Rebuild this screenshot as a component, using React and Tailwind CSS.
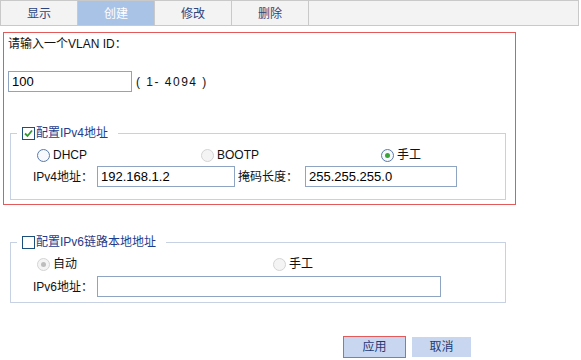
import React from 'react';

function Radio({ checked = false, disabled = false }) {
    const ring = disabled ? 'border-[#d4d4d4] bg-[#f4f4f4]' : 'border-[#5a7aa8] bg-[#f7f9fc]';
    return (
        <span className={`inline-flex w-[13px] h-[13px] rounded-full border items-center justify-center shrink-0 ${ring}`}>
            {checked && (
                <span className={`w-[5px] h-[5px] rounded-full ${disabled ? 'bg-[#bdbdbd]' : 'bg-[#3aa53a]'}`}></span>
            )}
        </span>
    );
}

function Checkbox({ checked = false }) {
    return (
        <span className="inline-flex w-[13px] h-[13px] border border-[#1d4f7c] bg-white items-center justify-center shrink-0">
            {checked && (
                <svg className="w-[9px] h-[9px]" viewBox="0 0 9 9" fill="none">
                    <path d="M1 4.5 L3.5 7 L8 1.5" stroke="#2e9a2e" strokeWidth="1.8" />
                </svg>
            )}
        </span>
    );
}

function TextInput({ value, className }) {
    return (
        <div className={`h-[21px] border border-[#8ea4c0] bg-white pl-[3px] flex items-center text-[13px] text-black ${className}`}>
            {value}
        </div>
    );
}

export default function App() {
    const tabs = ['显示', '创建', '修改', '删除'];

    return (
        <div className="w-[581px] h-[360px] bg-white text-[12px] text-[#111] overflow-hidden" style={{ fontFamily: '"Liberation Sans", "Noto Sans CJK SC", sans-serif' }}>
            {/* tab bar */}
            <div className="w-[579px] h-[26px] flex border border-[#c9c9c9] bg-[#f3f3f3]">
                {tabs.map((t, i) => (
                    <div
                        key={t}
                        className={`w-[77px] h-full pt-[1px] flex items-center justify-center border-r border-[#c9c9c9] text-[12px] ${i === 1 ? 'bg-[#a9c3e7] text-white' : 'text-[#2c447c]'}`}
                    >
                        {t}
                    </div>
                ))}
            </div>

            {/* VLAN + IPv4 */}
            <div className="ml-[3px] mt-[6px] w-[513px] h-[173px] border border-[#e25a5a] pl-[4px]">
                <div className="pt-[2px] leading-[18px]">请输入一个VLAN ID：</div>
                <div className="mt-[18px] flex items-center">
                    <TextInput value="100" className="w-[124px]" />
                    <span className="ml-[4px] tracking-[1.5px]">( 1- 4094 )</span>
                </div>

                <fieldset className="mt-[34px] ml-[2px] w-[496px] border border-[#c6d2e3] pb-[12px]">
                    <legend className="ml-[6px] pl-[5px] pr-[10px] h-[14px] flex items-center gap-[1px]">
                        <Checkbox checked />
                        <span className="text-[#1f3d8c] text-[12px]">配置IPv4地址</span>
                    </legend>
                    <div className="mt-[6px] h-[18px] pl-[26px] flex items-center">
                        <div className="w-[164px] flex items-center gap-[3px]">
                            <Radio />
                            <span>DHCP</span>
                        </div>
                        <div className="w-[180px] flex items-center gap-[3px]">
                            <Radio disabled />
                            <span>BOOTP</span>
                        </div>
                        <div className="flex items-center gap-[3px]">
                            <Radio checked />
                            <span>手工</span>
                        </div>
                    </div>
                    <div className="mt-[2px] pl-[22px] flex items-center">
                        <span className="w-[64px]">IPv4地址：</span>
                        <TextInput value="192.168.1.2" className="w-[138px]" />
                        <span className="ml-[3px] w-[67px]">掩码长度：</span>
                        <TextInput value="255.255.255.0" className="w-[152px]" />
                    </div>
                </fieldset>
            </div>

            {/* IPv6 */}
            <fieldset className="mt-[30px] ml-[10px] w-[496px] border border-[#c6d2e3] pb-[5px]">
                <legend className="ml-[6px] pl-[5px] pr-[10px] h-[14px] flex items-center gap-[1px]">
                    <Checkbox />
                    <span className="text-[#1f3d8c] text-[12px]">配置IPv6链路本地地址</span>
                </legend>
                <div className="mt-[6px] h-[18px] pl-[26px] flex items-center">
                    <div className="w-[236px] flex items-center gap-[3px]">
                        <Radio checked disabled />
                        <span>自动</span>
                    </div>
                    <div className="flex items-center gap-[3px]">
                        <Radio disabled />
                        <span>手工</span>
                    </div>
                </div>
                <div className="mt-[3px] pl-[22px] flex items-center">
                    <span className="w-[64px]">IPv6地址：</span>
                    <TextInput value="" className="w-[344px]" />
                </div>
            </fieldset>

            {/* buttons */}
            <div className="mt-[33px] pl-[343px] flex items-center gap-[6px]">
                <button className="w-[63px] h-[22px] border border-[#e25a5a] bg-[#c8d7ef] text-[#1f3a78] text-[12px] flex items-center justify-center">应用</button>
                <button className="w-[59px] h-[20px] bg-[#c8d7ef] text-[#1f3a78] text-[12px] flex items-center justify-center">取消</button>
            </div>
        </div>
    );
}
